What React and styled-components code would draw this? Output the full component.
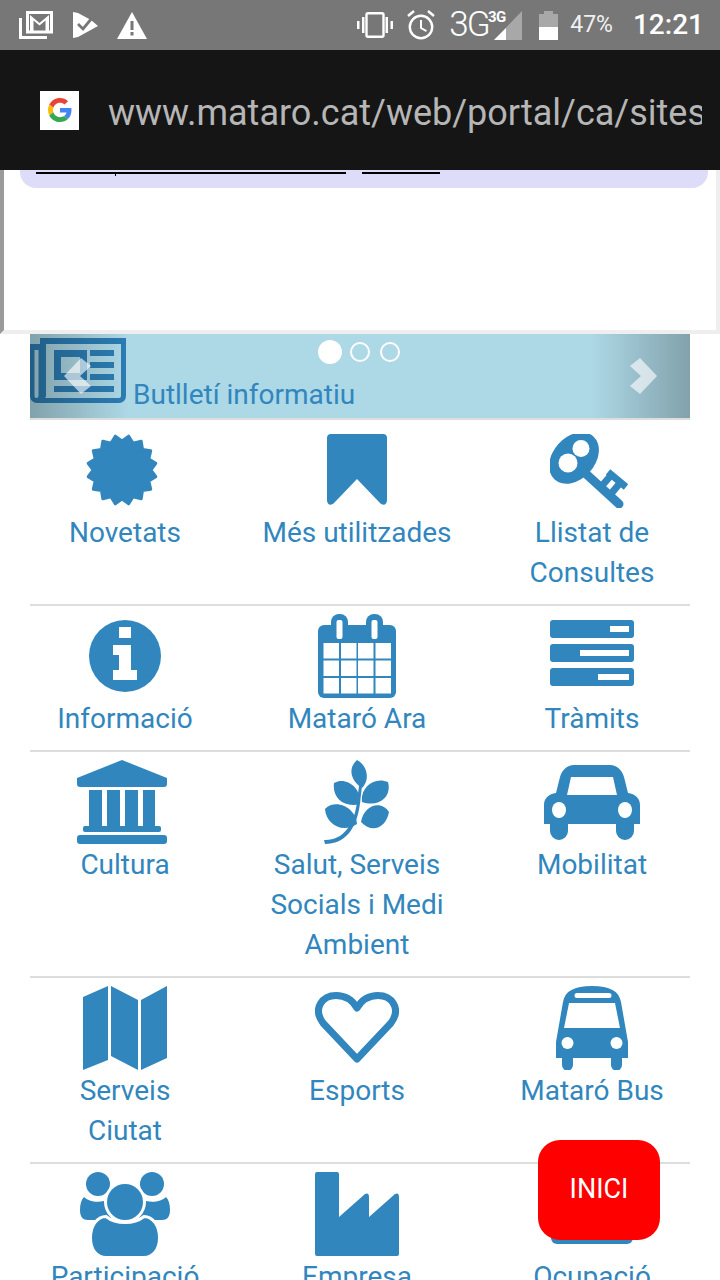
import styled, { createGlobalStyle } from 'styled-components'

const BLUE = '#3186bd'

const GlobalStyle = createGlobalStyle`
  html, body {
    margin: 0;
    padding: 0;
    background: #fff;
    overflow: hidden;
  }
  * { box-sizing: border-box; }
`

const Screen = styled.div`
  position: relative;
  width: 720px;
  height: 1280px;
  overflow: hidden;
  background: #fff;
  font-family: Roboto, "Liberation Sans", sans-serif;
`

const StatusBar = styled.div`
  display: flex;
  align-items: center;
  justify-content: space-between;
  height: 50px;
  padding: 0 16px 0 19px;
  background: #777777;
  color: #fff;
`

const StatusGroup = styled.div`
  display: flex;
  align-items: center;
`

const StatusSvg = styled.svg`
  display: block;
  flex: none;
  margin-left: ${(p) => p.$gap || 0}px;
`

const NetworkText = styled.span`
  display: block;
  width: 37px;
  margin-left: 14px;
  font-size: 35px;
  font-weight: 300;
  line-height: 50px;
  letter-spacing: -2px;
  white-space: nowrap;
`

const NetworkSup = styled.span`
  position: absolute;
  left: 488px;
  top: 9px;
  font-size: 15px;
  font-weight: 700;
  line-height: 16px;
  letter-spacing: -0.5px;
`

const Percent = styled.span`
  margin-left: 12px;
  font-size: 23px;
  line-height: 50px;
  color: #f1f1f1;
`

const Clock = styled.span`
  margin-left: 20px;
  font-size: 28px;
  font-weight: 500;
  line-height: 50px;
`

const UrlBar = styled.div`
  display: flex;
  align-items: center;
  height: 120px;
  padding: 0 18px 0 40px;
  background: #151515;
`

const Favicon = styled.div`
  display: flex;
  flex: none;
  align-items: center;
  justify-content: center;
  width: 39px;
  height: 39px;
  background: #fff;
`

const UrlText = styled.div`
  margin: 5px 0 0 29px;
  overflow: hidden;
  white-space: nowrap;
  font-size: 36px;
  line-height: 44px;
  color: #b6b6b6;
`

const Frame = styled.div`
  height: 164px;
  border-style: solid;
  border-width: 0 4px 4px 4px;
  border-color: #9a9a9a #eeeeee #eeeeee #9a9a9a;
`

const Notice = styled.div`
  display: flex;
  gap: 16px;
  height: 18px;
  margin: 0 8px 0 16px;
  padding: 2px 0 0 16px;
  background: #ddddfa;
  border-radius: 0 0 16px 16px;
`

const NoticeLink = styled.span`
  position: relative;
  display: block;
  width: ${(p) => p.$w}px;
  height: 2px;
  background: #000;

  ${(p) =>
    p.$tick &&
    `&::after {
      content: '';
      position: absolute;
      left: 79px;
      top: 0;
      width: 1px;
      height: 4px;
      background: #000;
    }`}
`

const Content = styled.div`
  margin: 0 30px;
`

const Carousel = styled.div`
  position: relative;
  display: flex;
  align-items: flex-start;
  gap: 7px;
  height: 84px;
  padding-top: 4px;
  background: #add8e6;
`

const Caption = styled.span`
  margin-top: 37px;
  font-size: 28px;
  line-height: 40px;
  color: ${BLUE};
`

const Control = styled.div`
  position: absolute;
  top: 0;
  bottom: 0;
  width: 99px;
  ${(p) => (p.$side === 'left' ? 'left: 0;' : 'right: 0;')}
  display: flex;
  align-items: center;
  justify-content: ${(p) => (p.$side === 'left' ? 'flex-start' : 'flex-end')};
  padding: 0 33px 0 34px;
  background: linear-gradient(
    ${(p) => (p.$side === 'left' ? 'to right' : 'to left')},
    rgba(0, 0, 0, 0.25),
    rgba(0, 0, 0, 0)
  );
`

const Indicators = styled.div`
  position: absolute;
  top: 8px;
  left: 290px;
  display: flex;
  align-items: center;
  gap: 10px;
`

const Dot = styled.span`
  display: block;
  flex: none;
  width: ${(p) => (p.$active ? 24 : 20)}px;
  height: ${(p) => (p.$active ? 24 : 20)}px;
  margin: ${(p) => (p.$active ? '-2px' : '0')};
  border: 2px solid #fff;
  border-radius: 50%;
  background: ${(p) => (p.$active ? '#fff' : 'transparent')};
`

const Row = styled.div`
  display: grid;
  grid-template-columns: 190px 274px 196px;
  padding: 8px 0 11px;
  border-top: 2px solid #dddddd;
`

const Item = styled.div`
  display: flex;
  flex-direction: column;
  align-items: center;
`

const IconBox = styled.div`
  display: flex;
  align-items: center;
  justify-content: center;
  height: 85px;
  padding-bottom: 1px;
`

const Glyph = styled.svg`
  display: block;
  flex: none;
  fill: ${BLUE};
  margin-left: ${(p) => p.$dx || 0}px;
  margin-top: ${(p) => p.$dy || 0}px;
`

const Label = styled.div`
  font-size: 28px;
  line-height: 40px;
  text-align: center;
  white-space: pre-line;
  color: ${BLUE};
`

const HomeButton = styled.button`
  position: absolute;
  left: 538px;
  top: 1140px;
  width: 122px;
  height: 100px;
  padding: 0 0 3px;
  border: 0;
  border-radius: 22px;
  background: #ff0000;
  color: #fff;
  font-family: inherit;
  font-size: 27px;
`

const MailIcon = () => (
  <StatusSvg width="34" height="28" viewBox="0 0 34 28">
    <path d="M1.500 7v19.500H28" fill="none" stroke="#fff" strokeWidth="3" />
    <rect x="8.500" y="1.500" width="24" height="19.500" fill="none" stroke="#fff" strokeWidth="3" />
    <path d="M11 21V4l9.500 8 9.500-8v17h-3.500V9.500l-6 5-6-5V21z" fill="#fff" />
  </StatusSvg>
)

const TaskIcon = () => (
  <StatusSvg $gap={20} width="25" height="26" viewBox="0 0 25 26">
    <path d="M0 0l5 1 13 7 7 6-20 11-5 1z" fill="#fff" />
    <path d="M5 12l5 5 9-11" fill="none" stroke="#777" strokeWidth="2.800" />
  </StatusSvg>
)

const WarnIcon = () => (
  <StatusSvg $gap={19} width="30" height="27" viewBox="0 0 30 27">
    <path d="M15 0l15 27H0z" fill="#fff" />
    <path d="M13.500 9h3v9h-3zM13.500 20h3v3.500h-3z" fill="#777" />
  </StatusSvg>
)

const VibrateIcon = () => (
  <StatusSvg width="36" height="26" viewBox="0 0 36 26">
    <rect x="9.500" y="1.200" width="17" height="23.600" rx="1.500" fill="none" stroke="#fff" strokeWidth="2.400" />
    <path d="M0 9h2.500v8H0zM5 5h2.500v16H5zM28.500 5H31v16h-2.500zM33.500 9H36v8h-2.500z" fill="#fff" />
  </StatusSvg>
)

const AlarmIcon = () => (
  <StatusSvg $gap={14} width="28" height="30" viewBox="0 0 28 30">
    <circle cx="14" cy="17" r="11.200" fill="none" stroke="#fff" strokeWidth="2.400" />
    <path d="M14 10v8l5.500 3.200" fill="none" stroke="#fff" strokeWidth="2" />
    <path d="M1 6l6-5M27 6l-6-5" fill="none" stroke="#fff" strokeWidth="2.400" />
  </StatusSvg>
)

const SignalIcon = () => (
  <StatusSvg $gap={8} width="28" height="29" viewBox="0 0 28 29">
    <path d="M28 0v29H0z" fill="#a8a8a8" />
    <path d="M12 17v12H0z" fill="#fff" />
  </StatusSvg>
)

const BatteryIcon = () => (
  <StatusSvg $gap={17} width="19" height="29" viewBox="0 0 19 29">
    <path d="M0 3h5V0h9v3h5v14H0z" fill="#a8a8a8" />
    <path d="M0 16h19v13H0z" fill="#fff" />
  </StatusSvg>
)

const GoogleG = () => (
  <svg width="24" height="24" viewBox="0 0 48 48">
    <path fill="#EA4335" d="M24 9.500c3.540 0 6.710 1.220 9.210 3.600l6.850-6.850C35.900 2.380 30.470 0 24 0 14.620 0 6.510 5.380 2.560 13.220l7.980 6.190C12.430 13.720 17.740 9.500 24 9.500z" />
    <path fill="#4285F4" d="M46.980 24.550c0-1.570-.15-3.090-.38-4.550H24v9.020h12.940c-.58 2.960-2.260 5.480-4.780 7.180l7.730 6c4.510-4.180 7.090-10.360 7.090-17.650z" />
    <path fill="#FBBC05" d="M10.530 28.590c-.48-1.450-.76-2.990-.76-4.590s.27-3.140.76-4.590l-7.980-6.190C.92 16.460 0 20.120 0 24c0 3.880.92 7.540 2.560 10.780l7.970-6.190z" />
    <path fill="#34A853" d="M24 48c6.480 0 11.930-2.130 15.890-5.810l-7.730-6c-2.150 1.450-4.920 2.300-8.160 2.300-6.260 0-11.570-4.220-13.470-9.910l-7.980 6.190C6.510 42.620 14.620 48 24 48z" />
  </svg>
)

const Newspaper = () => (
  <svg width="96" height="65" viewBox="0 0 96 65" style={{ flex: 'none', display: 'block' }}>
    <path
      d="M10 0h86v58a7 7 0 0 1-7 7H7a7 7 0 0 1-7-7V6h10zM4.500 12v46a2 2 0 0 0 4 0V12zM16 6v52q0 1-1 2h74q2 0 2-2V6z"
      fill="#2b7db4"
      fillRule="evenodd"
    />
    <path
      d="M24 12h33v30H24zM31 19v16h19V19zM60 12h24v6H60zM60 24h24v6H60zM60 36h24v6H60zM24 48h60v6H24z"
      fill="#2b7db4"
      fillRule="evenodd"
    />
  </svg>
)

const Chevron = ({ flip }) => (
  <svg width="27" height="36" viewBox="0 0 27 36" style={{ display: 'block', flex: 'none' }}>
    <path
      d={flip ? 'M10 0l17 18-17 18-10-8 11-10L0 8z' : 'M17 0L0 18l17 18 10-8-11-10L27 8z'}
      fill="rgba(255,255,255,0.62)"
    />
  </svg>
)

const starPoints = () => {
  const pts = []
  for (let i = 0; i < 32; i++) {
    const r = i % 2 === 0 ? 34.500 : 29
    const a = ((i + 1) * Math.PI) / 16 - Math.PI / 2
    pts.push(`${(36 + r * Math.cos(a)).toFixed(1)},${(36 + r * Math.sin(a)).toFixed(1)}`)
  }
  return pts.join(' ')
}

const StarIcon = () => (
  <Glyph $dx={-7} width="72" height="72" viewBox="0 0 72 72">
    <polygon points={starPoints()} stroke={BLUE} strokeWidth="3" strokeLinejoin="round" />
  </Glyph>
)

const BookmarkIcon = () => (
  <Glyph width="60" height="72" viewBox="0 0 60 72">
    <path d="M4 0h52a4 4 0 0 1 4 4v62c0 5-4 6-7 3L30 45 7 69c-3 3-7 2-7-3V4a4 4 0 0 1 4-4z" />
  </Glyph>
)

const KeyIcon = () => (
  <Glyph $dx={-6} $dy={2} width="78" height="74" viewBox="0 0 78 74">
    <ellipse cx="24" cy="24" rx="29" ry="21" transform="rotate(-48 24 24)" />
    <circle cx="31" cy="14.500" r="8.500" fill="#fff" />
    <circle cx="18" cy="29" r="9.500" fill="#fff" />
    <path d="M34 38l35 32" stroke={BLUE} strokeWidth="9" strokeLinecap="round" />
    <path d="M50 54l13-15M58 38l18 15M60 61l10-12" stroke={BLUE} strokeWidth="7" fill="none" />
  </Glyph>
)

const InfoIcon = () => (
  <Glyph $dx={-1} width="72" height="72" viewBox="0 0 72 72">
    <circle cx="36" cy="36" r="36" />
    <path d="M30 7h12v11H30zM24 25h18v25h6v10H24V50h6V35h-6z" fill="#fff" />
  </Glyph>
)

const CalendarIcon = () => (
  <Glyph width="78" height="84" viewBox="0 0 78 84">
    <rect y="11" width="78" height="73" rx="6" />
    <rect x="13" width="17" height="26" rx="8" />
    <rect x="48" width="17" height="26" rx="8" />
    <g fill="#fff">
      <rect x="18.500" y="6" width="6" height="19" rx="2" />
      <rect x="53.500" y="6" width="6" height="19" rx="2" />
      {[29, 46.500, 64].map((y) =>
        [5.500, 23, 40, 57.500].map((x) => (
          <rect key={`${x}-${y}`} x={x} y={y} width="15.500" height="15.500" />
        ))
      )}
    </g>
  </Glyph>
)

const StackIcon = () => (
  <Glyph $dy={-6} width="84" height="66" viewBox="0 0 84 66">
    <rect width="84" height="18" rx="3" />
    <rect y="24" width="84" height="18" rx="3" />
    <rect y="48" width="84" height="18" rx="3" />
    <path d="M60 6h19v6H60zM30 30h49v6H30zM48 54h31v6H48z" fill="#fff" />
  </Glyph>
)

const TempleIcon = () => (
  <Glyph $dx={-6} width="90" height="84" viewBox="0 0 90 84">
    <path d="M45 0l45 18v6q0 3-3 3H3q-3 0-3-3v-6z" />
    <path d="M12 30h13v37H12zM30 30h13v37H30zM48 30h13v37H48zM66 30h12v37H66z" />
    <rect x="6" y="66" width="78" height="6" rx="2" />
    <rect y="75" width="90" height="9" rx="3" />
  </Glyph>
)

const BranchIcon = () => (
  <Glyph width="66" height="84" viewBox="0 0 66 84">
    <path d="M0 80c18 1 30-14 33-38l2-16 3 0-2 17C33 70 20 84 1 84z" />
    <path d="M33 0c11 6 13 20 5 28C26 20 24 8 33 0zM10 23c12-7 28 5 26 21C20 48 8 38 10 23zM64 22c4 14-8 26-26 20-2-14 12-26 26-20zM1 49c11-11 31-1 32 15C18 74 2 64 1 49zM65 52c-7-12-25-8-28 10 11 12 25 6 28-10z" />
  </Glyph>
)

const CarIcon = () => (
  <Glyph width="96" height="75" viewBox="0 0 96 75">
    <path
      fillRule="evenodd"
      d="M30 0h36c7 0 12 5 14 12l4 16c7 1 12 5 12 12v19H0V40c0-7 5-11 12-12l4-16C18 5 23 0 30 0zM27 12l-4 18h50l-4-18z"
    />
    <path d="M6 55h18v11a9 9 0 0 1-18 0zM72 55h18v11a9 9 0 0 1-18 0z" />
    <ellipse cx="15" cy="45" rx="7" ry="8" fill="#fff" />
    <ellipse cx="81" cy="45" rx="7" ry="8" fill="#fff" />
  </Glyph>
)

const MapIcon = () => (
  <Glyph width="84" height="84" viewBox="0 0 84 84">
    <path d="M0 11L25 0v74L0 84zM28 0l27 14v70L28 70zM58 14L84 0v72L58 84z" />
  </Glyph>
)

const HeartIcon = () => (
  <Glyph width="84" height="72" viewBox="0 0 84 72">
    <path
      d="M42 67L8 31C-3 16 8 3.500 21 3.500c10 0 17 5.500 21 12.500 4-7 11-12.500 21-12.500 13 0 24 12.500 13 27.500z"
      fill="none"
      stroke={BLUE}
      strokeWidth="7"
      strokeLinejoin="round"
    />
  </Glyph>
)

const BusIcon = () => (
  <Glyph width="72" height="84" viewBox="0 0 72 84">
    <path
      fillRule="evenodd"
      d="M36 0c18 0 27 5 29 16l7 40v16H0V56l7-40C9 5 18 0 36 0zM21 7a2.500 2.500 0 0 0 0 5h32a2.500 2.500 0 0 0 0-5zM13 17L8 42h56l-5-25z"
    />
    <path d="M6 70h11v9a5.500 5.500 0 0 1-11 0zM55 70h11v9a5.500 5.500 0 0 1-11 0z" />
    <circle cx="11.500" cy="57" r="6" fill="#fff" />
    <circle cx="60.500" cy="57" r="6" fill="#fff" />
  </Glyph>
)

const PeopleIcon = () => (
  <Glyph width="90" height="84" viewBox="0 0 90 84">
    <ellipse cx="18" cy="12" rx="12" ry="12" />
    <ellipse cx="72" cy="12" rx="12" ry="12" />
    <path d="M4 25c4 4 12 6 20 4l8 19H8c-5 0-8-3-8-10 0-5 1-10 4-13zM86 25c-4 4-12 6-20 4l-8 19h24c5 0 8-3 8-10 0-5-1-10-4-13z" />
    <ellipse cx="45" cy="30" rx="21" ry="21" fill="#fff" />
    <ellipse cx="45" cy="30" rx="18" ry="18" />
    <path
      d="M10.500 66C10.500 54 17 44.500 26 44.500c10 8 28 8 38 0 9 0 15.500 9.500 15.500 21.500 0 12-7 19.500-15.500 19.500H26C17 85.500 10.500 78 10.500 66z"
      stroke="#fff"
      strokeWidth="3"
    />
  </Glyph>
)

const FactoryIcon = () => (
  <Glyph width="84" height="84" viewBox="0 0 84 84">
    <path d="M2 0h20a2 2 0 0 1 2 2v43l26-23q4-2 4 3v20l26-23q4-2 4 3v57a2 2 0 0 1-2 2H2a2 2 0 0 1-2-2V2a2 2 0 0 1 2-2z" />
  </Glyph>
)

const BriefcaseIcon = () => (
  <Glyph width="82" height="60" viewBox="0 0 82 60">
    <rect width="82" height="60" rx="6" />
  </Glyph>
)

const rows = [
  [
    { label: 'Novetats', icon: <StarIcon /> },
    { label: 'Més utilitzades', icon: <BookmarkIcon /> },
    { label: 'Llistat de\nConsultes', icon: <KeyIcon /> },
  ],
  [
    { label: 'Informació', icon: <InfoIcon /> },
    { label: 'Mataró Ara', icon: <CalendarIcon /> },
    { label: 'Tràmits', icon: <StackIcon /> },
  ],
  [
    { label: 'Cultura', icon: <TempleIcon /> },
    { label: 'Salut, Serveis\nSocials i Medi\nAmbient', icon: <BranchIcon /> },
    { label: 'Mobilitat', icon: <CarIcon /> },
  ],
  [
    { label: 'Serveis\nCiutat', icon: <MapIcon /> },
    { label: 'Esports', icon: <HeartIcon /> },
    { label: 'Mataró Bus', icon: <BusIcon /> },
  ],
  [
    { label: 'Participació', icon: <PeopleIcon /> },
    { label: 'Empresa', icon: <FactoryIcon /> },
    { label: 'Ocupació', icon: <BriefcaseIcon /> },
  ],
]

export default function App() {
  return (
    <Screen>
      <GlobalStyle />
      <StatusBar>
        <StatusGroup>
          <MailIcon />
          <TaskIcon />
          <WarnIcon />
        </StatusGroup>
        <StatusGroup>
          <VibrateIcon />
          <AlarmIcon />
          <NetworkText>3G</NetworkText>
          <SignalIcon />
          <BatteryIcon />
          <Percent>47%</Percent>
          <Clock>12:21</Clock>
        </StatusGroup>
        <NetworkSup>3G</NetworkSup>
      </StatusBar>

      <UrlBar>
        <Favicon>
          <GoogleG />
        </Favicon>
        <UrlText>www.mataro.cat/web/portal/ca/sites/default</UrlText>
      </UrlBar>

      <Frame>
        <Notice>
          <NoticeLink $w={310} $tick />
          <NoticeLink $w={78} />
        </Notice>
      </Frame>

      <Content>
        <Carousel>
          <Newspaper />
          <Caption>Butlletí informatiu</Caption>
          <Control $side="left">
            <Chevron />
          </Control>
          <Control $side="right">
            <Chevron flip />
          </Control>
          <Indicators>
            <Dot $active />
            <Dot />
            <Dot />
          </Indicators>
        </Carousel>

        {rows.map((row) => (
          <Row key={row[0].label}>
            {row.map((item) => (
              <Item key={item.label}>
                <IconBox>{item.icon}</IconBox>
                <Label>{item.label}</Label>
              </Item>
            ))}
          </Row>
        ))}
      </Content>

      <HomeButton>INICI</HomeButton>
    </Screen>
  )
}
